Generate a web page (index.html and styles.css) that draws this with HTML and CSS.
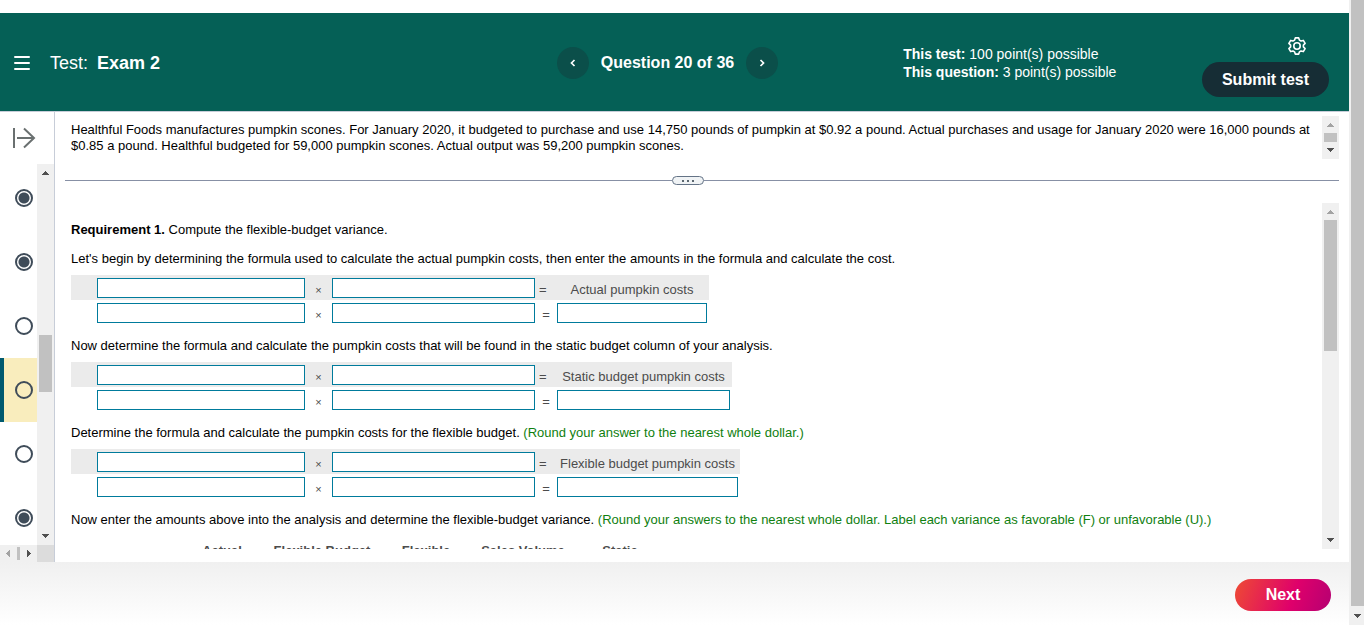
FILE: index.html
```
<!DOCTYPE html>
<html lang="en">
<head>
    <meta charset="UTF-8">
    <meta name="viewport" content="width=device-width, initial-scale=1.0">
    <title>Test: Exam 2</title>
    <link rel="stylesheet" href="styles.css">
</head>
<body>
    <svg class="sprite" aria-hidden="true">
        <symbol id="up" viewBox="0 0 17 17"><path d="M8 7h1v1h1v1h1v1h1v1H5v-1h1V9h1V8h1z" fill="currentColor"/></symbol>
        <symbol id="down" viewBox="0 0 17 17"><path d="M5 6h7v1h-1v1h-1v1H9v1H8V9H7V8H6V7H5z" fill="currentColor"/></symbol>
        <symbol id="left" viewBox="0 0 17 17"><path d="M6 8h1V7h1V6h1V5h1v7H9v-1H8v-1H7V9H6z" fill="currentColor"/></symbol>
        <symbol id="right" viewBox="0 0 17 17"><path d="M7 5h1v1h1v1h1v1h1v1h-1v1H9v1H8v1H7z" fill="currentColor"/></symbol>
    </svg>

    <div class="app">
        <header class="header">
            <div class="title">
                <button class="icon-button" type="button" aria-label="Menu">
                    <svg width="16" height="14" viewBox="0 0 16 14"><path d="M1 1h14M1 7h14M1 13h14" stroke="#fff" stroke-width="2" stroke-linecap="round"/></svg>
                </button>
                <h1>Test: <strong>Exam 2</strong></h1>
            </div>

            <div class="question-nav">
                <button class="round-button" type="button" aria-label="Previous question">
                    <svg width="8" height="10" viewBox="0 0 8 10"><path d="M5.5 2 2.5 5l3 3" fill="none" stroke="#fff" stroke-width="1.7"/></svg>
                </button>
                <strong>Question 20 of 36</strong>
                <button class="round-button" type="button" aria-label="Next question">
                    <svg width="8" height="10" viewBox="0 0 8 10"><path d="m2.500 2 3 3-3 3" fill="none" stroke="#fff" stroke-width="1.7"/></svg>
                </button>
            </div>

            <div class="header-right">
                <div class="points">
                    <div><strong>This test:</strong> 100 point(s) possible</div>
                    <div><strong>This question:</strong> 3 point(s) possible</div>
                </div>
                <div class="actions">
                    <button class="icon-button gear" type="button" aria-label="Settings">
                        <svg width="18" height="18" viewBox="0 0 18 18" fill="none" stroke="#fff" stroke-width="1.6" stroke-linejoin="round">
                            <path d="M7.300 .9h3.400l.7 2.200 1.600.9 2.300-.6 1.800 3-1.700 1.700v1.800l1.700 1.700-1.800 3-2.300-.6-1.600.9-.7 2.200H7.300l-.7-2.200-1.600-.9-2.300.6-1.800-3 1.700-1.700V8.100L.9 6.400l1.800-3 2.300.6 1.600-.9z"/>
                            <circle cx="9" cy="9" r="3.200"/>
                        </svg>
                    </button>
                    <button class="submit" type="button">Submit test</button>
                </div>
            </div>
        </header>

        <div class="content">
            <nav class="sidebar" aria-label="Questions">
                <button class="icon-button expand" type="button" aria-label="Expand question list">
                    <svg width="24" height="22" viewBox="0 0 24 22"><path d="M2 1v20M5 11h17M12 1.500l10 9.500-10 9.500" fill="none" stroke="#6a7070" stroke-width="2"/></svg>
                </button>
                <div class="question-list">
                    <ul>
                        <li><input type="radio" name="q17" aria-label="Question 17" checked></li>
                        <li><input type="radio" name="q18" aria-label="Question 18" checked></li>
                        <li><input type="radio" name="q19" aria-label="Question 19"></li>
                        <li class="current"><input type="radio" name="q20" aria-label="Question 20"></li>
                        <li><input type="radio" name="q21" aria-label="Question 21"></li>
                        <li><input type="radio" name="q22" aria-label="Question 22" checked></li>
                    </ul>
                    <div class="scrollbar list-scroll">
                        <svg class="arrow"><use href="#up"/></svg>
                        <div class="track"><div class="thumb"></div></div>
                        <svg class="arrow"><use href="#down"/></svg>
                    </div>
                </div>
                <div class="scroll-row">
                    <svg class="arrow off"><use href="#left"/></svg>
                    <div class="thumb"></div>
                    <svg class="arrow"><use href="#right"/></svg>
                    <div class="corner"></div>
                </div>
            </nav>

            <main class="main">
                <section class="pane problem">
                    <p>Healthful Foods manufactures pumpkin scones. For January 2020, it budgeted to purchase and use 14,750 pounds of pumpkin at $0.92 a pound. Actual purchases and usage for January 2020 were 16,000 pounds at $0.85 a pound. Healthful budgeted for 59,000 pumpkin scones. Actual output was 59,200 pumpkin scones.</p>
                    <div class="scrollbar">
                        <svg class="arrow off"><use href="#up"/></svg>
                        <div class="track"><div class="thumb"></div></div>
                        <svg class="arrow"><use href="#down"/></svg>
                    </div>
                </section>

                <div class="splitter">
                    <button type="button" aria-label="Resize panes">
                        <svg width="12" height="2" viewBox="0 0 12 2"><path d="M0 0h2v2H0zM5 0h2v2H5zM10 0h2v2h-2z" fill="#5b6770"/></svg>
                    </button>
                </div>

                <section class="pane work">
                    <div class="work-body">
                        <p><strong>Requirement 1.</strong> Compute the flexible-budget variance.</p>
                        <p>Let's begin by determining the formula used to calculate the actual pumpkin costs, then enter the amounts in the formula and calculate the cost.</p>
                        <table class="formula actual">
                            <tr>
                                <td class="lead"></td>
                                <td class="first"><input type="text" aria-label="Actual costs, first factor name"></td>
                                <td class="times">×</td>
                                <td class="second"><input type="text" aria-label="Actual costs, second factor name"></td>
                                <td class="equals">=</td>
                                <td class="result label">Actual pumpkin costs</td>
                            </tr>
                            <tr>
                                <td></td>
                                <td><input type="text" aria-label="Actual costs, first amount"></td>
                                <td class="times">×</td>
                                <td><input type="text" aria-label="Actual costs, second amount"></td>
                                <td class="equals">=</td>
                                <td class="result"><input type="text" aria-label="Actual pumpkin costs"></td>
                            </tr>
                        </table>

                        <p>Now determine the formula and calculate the pumpkin costs that will be found in the static budget column of your analysis.</p>
                        <table class="formula static">
                            <tr>
                                <td class="lead"></td>
                                <td class="first"><input type="text" aria-label="Static budget, first factor name"></td>
                                <td class="times">×</td>
                                <td class="second"><input type="text" aria-label="Static budget, second factor name"></td>
                                <td class="equals">=</td>
                                <td class="result label">Static budget pumpkin costs</td>
                            </tr>
                            <tr>
                                <td></td>
                                <td><input type="text" aria-label="Static budget, first amount"></td>
                                <td class="times">×</td>
                                <td><input type="text" aria-label="Static budget, second amount"></td>
                                <td class="equals">=</td>
                                <td class="result"><input type="text" aria-label="Static budget pumpkin costs"></td>
                            </tr>
                        </table>

                        <p>Determine the formula and calculate the pumpkin costs for the flexible budget. <span class="hint">(Round your answer to the nearest whole dollar.)</span></p>
                        <table class="formula flexible">
                            <tr>
                                <td class="lead"></td>
                                <td class="first"><input type="text" aria-label="Flexible budget, first factor name"></td>
                                <td class="times">×</td>
                                <td class="second"><input type="text" aria-label="Flexible budget, second factor name"></td>
                                <td class="equals">=</td>
                                <td class="result label">Flexible budget pumpkin costs</td>
                            </tr>
                            <tr>
                                <td></td>
                                <td><input type="text" aria-label="Flexible budget, first amount"></td>
                                <td class="times">×</td>
                                <td><input type="text" aria-label="Flexible budget, second amount"></td>
                                <td class="equals">=</td>
                                <td class="result"><input type="text" aria-label="Flexible budget pumpkin costs"></td>
                            </tr>
                        </table>

                        <p>Now enter the amounts above into the analysis and determine the flexible-budget variance. <span class="hint">(Round your answers to the nearest whole dollar. Label each variance as favorable (F) or unfavorable (U).)</span></p>
                        <table class="analysis">
                            <tr>
                                <th class="actual-col">Actual</th>
                                <th class="variance-col">Flexible Budget</th>
                                <th class="budget-col">Flexible</th>
                                <th class="volume-col">Sales Volume</th>
                                <th class="budget-col">Static</th>
                            </tr>
                        </table>
                    </div>
                    <div class="scrollbar work-scroll">
                        <svg class="arrow off"><use href="#up"/></svg>
                        <div class="track"><div class="thumb"></div></div>
                        <svg class="arrow"><use href="#down"/></svg>
                    </div>
                </section>
            </main>
        </div>

        <footer class="footer">
            <button class="next" type="button">Next</button>
        </footer>
    </div>

    <div class="scrollbar page-scroll">
        <div class="track"><div class="thumb"></div></div>
        <svg class="arrow"><use href="#down"/></svg>
    </div>
</body>
</html>
```
FILE: styles.css
```
* {
    box-sizing: border-box;
}
body {
    display: flex;
    height: 100vh;
    margin: 0;
    overflow: hidden;
    background: #fff;
    color: #000;
    font: 13px/16px "Liberation Sans", Arial, sans-serif;
}
button {
    padding: 0;
    border: 0;
    color: #fff;
    font: bold 16px/20px "Liberation Sans", Arial, sans-serif;
    cursor: pointer;
}
p {
    margin: 0;
}
.sprite {
    display: none;
}
.app {
    flex: 1;
    min-width: 0;
    display: flex;
    flex-direction: column;
    padding-top: 13px;
}

/* Header */
.header {
    display: grid;
    grid-template-columns: 1fr auto 1fr;
    align-items: center;
    height: 99px;
    padding: 2px 14px 0 0;
    border-bottom: 1px solid #c7cdd8;
    background: #056056;
    color: #fff;
}
.icon-button {
    display: flex;
    background: none;
}
.title {
    display: flex;
    align-items: center;
    gap: 20px;
    padding-left: 14px;
}
.title h1 {
    margin: 0;
    font-size: 18px;
    line-height: 20px;
    font-weight: normal;
}
.title strong {
    margin-left: 4px;
}
.question-nav {
    display: flex;
    align-items: center;
    gap: 12px;
    font-size: 16px;
}
.round-button {
    display: flex;
    align-items: center;
    justify-content: center;
    width: 32px;
    height: 32px;
    border-radius: 50%;
    background: #0b4f4a;
}
.header-right {
    display: flex;
    align-items: center;
    justify-content: space-between;
    padding: 0 6px 0 125px;
}
.points {
    font-size: 14px;
    line-height: 18px;
    white-space: nowrap;
}
.actions {
    display: flex;
    flex-direction: column;
    gap: 7px;
    padding-top: 8px;
}
.gear {
    align-self: flex-end;
    margin-right: 23px;
}
.submit {
    width: 127px;
    height: 35px;
    border-radius: 18px;
    background: #162d35;
}

/* Scrollbars */
.scrollbar {
    display: flex;
    flex-direction: column;
    flex: none;
    width: 17px;
    background: #f0f0f0;
    overflow: hidden;
}
.arrow {
    flex: none;
    width: 17px;
    height: 17px;
    color: #505050;
}
.arrow.off {
    color: #a3a3a3;
}
.track {
    flex: 1;
    padding: 0 2px;
}
.thumb {
    height: 100%;
    background: #c1c1c1;
}
.page-scroll {
    width: 15px;
}
.page-scroll .track {
    padding: 0 0 2px 2px;
}
.list-scroll .track {
    padding-top: 154px;
}
.list-scroll .thumb {
    height: 57px;
}
.work-scroll .thumb {
    height: 131px;
}

/* Question list */
.content {
    flex: 1;
    min-height: 0;
    display: flex;
}
.sidebar {
    display: flex;
    flex-direction: column;
    width: 55px;
    border-right: 1px solid #c7cdd8;
}
.expand {
    flex: none;
    height: 52px;
    padding-left: 12px;
    align-items: center;
}
.question-list {
    flex: 1;
    min-height: 0;
    display: flex;
}
.question-list ul {
    flex: 1;
    margin: 0;
    padding: 2px 0 0;
    list-style: none;
    overflow: hidden;
}
.question-list li {
    display: flex;
    align-items: center;
    height: 64px;
    padding-left: 11px;
    border-left: 4px solid transparent;
}
.question-list .current {
    border-left-color: #005a70;
    background: #f9edbd;
}
.question-list input {
    appearance: none;
    width: 18px;
    height: 18px;
    margin: 0;
    border: 2px solid #3f4c59;
    border-radius: 50%;
}
.question-list input:checked {
    background: radial-gradient(circle, #3f4c59 5px, #fff 6px);
}
.scroll-row {
    display: flex;
    height: 17px;
    background: #f0f0f0;
}
.scroll-row .thumb {
    width: 3px;
    height: 13px;
    margin: 2px 0;
}
.corner {
    flex: 1;
    background: #dcdcdc;
}

/* Question panes */
.main {
    flex: 1;
    min-width: 0;
    display: flex;
    flex-direction: column;
    padding: 4px 10px 13px;
}
.pane {
    display: flex;
    justify-content: space-between;
    padding-left: 6px;
}
.problem {
    height: 43px;
}
.problem p {
    padding: 6px 8px 0 0;
}
.splitter {
    display: flex;
    align-items: center;
    height: 9px;
    margin: 17px 0 18px;
}
.splitter::before,
.splitter::after {
    content: "";
    flex: 1;
    height: 1px;
    background: #8790a5;
}
.splitter::after {
    padding-right: 28px;
}
.splitter button {
    display: flex;
    align-items: center;
    justify-content: center;
    width: 32px;
    height: 9px;
    border: 1px solid #647386;
    border-radius: 5px;
    background: #f0f3f5;
}
.work {
    flex: 1;
    min-height: 0;
}
.work-body {
    flex: 1;
    padding-top: 19px;
    overflow: hidden;
}
.work-body p + p {
    margin-top: 13px;
}
.hint {
    color: #108010;
}
.formula {
    margin: 8px 0 13px;
    border-collapse: collapse;
    table-layout: fixed;
    color: #4c4c4c;
}
.formula tr {
    height: 25px;
}
.formula tr:first-child {
    background: #ebebeb;
}
.formula td {
    padding: 3px 0 2px;
}
.formula input {
    display: block;
    width: 100%;
    height: 20px;
    padding: 0 4px;
    border: 1px solid #007b9c;
    background: #fff;
    font: inherit;
}
.formula .times,
.formula .equals,
.formula .result {
    text-align: center;
}
.formula .times,
.formula .equals,
.formula .label {
    padding-top: 6px;
}
.formula .lead {
    width: 26px;
}
.formula .first {
    width: 208px;
}
.formula .times {
    width: 27px;
    font-size: 11px;
}
.formula .second {
    width: 203px;
}
.formula .equals {
    width: 22px;
}
.formula tr:first-child .equals {
    padding-left: 4px;
    text-align: left;
}
.formula .result {
    padding-right: 2px;
}
.actual {
    width: 638px;
}
.static {
    width: 661px;
}
.flexible {
    width: 669px;
}
.analysis {
    margin: 15px 0 0 109px;
    border-collapse: collapse;
    color: #4c4c4c;
}
.analysis th {
    padding: 0;
}
.actual-col {
    width: 84px;
}
.variance-col {
    width: 116px;
}
.budget-col {
    width: 92px;
}
.volume-col {
    width: 102px;
}

/* Footer */
.footer {
    display: flex;
    align-items: center;
    justify-content: flex-end;
    height: 63px;
    padding: 2px 18px 0 0;
    background: linear-gradient(#f0f0f0, #fff);
}
.next {
    width: 96px;
    height: 32px;
    border-radius: 16px;
    background: linear-gradient(110deg, #ee4b34, #df006b 60%, #b50072);
}
```
